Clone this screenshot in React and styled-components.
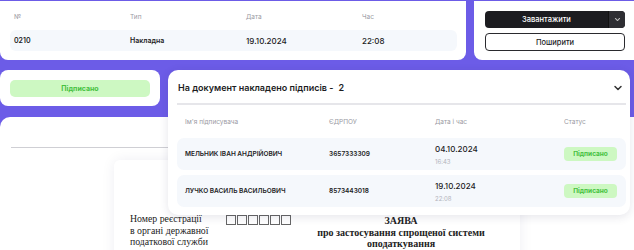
import React from "react";
import styled, { createGlobalStyle } from "styled-components";

const Global = createGlobalStyle`
  html, body { margin: 0; padding: 0; }
  body {
    width: 634px; height: 250px; overflow: hidden;
    background: #6c5ce7;
    font-family: Inter, "Noto Sans", sans-serif;
    color: #1d1d1f;
  }
`;

const Page = styled.div`
  position: relative;
  width: 634px;
  height: 250px;
  padding-top: 1px;
  box-sizing: border-box;
  overflow: hidden;
`;

const TopRow = styled.div`
  display: flex;
  gap: 8px;
  height: 59px;
`;

const Card = styled.div`
  background: #fff;
  border-radius: ${(p) => p.$radius || "8px"};
  box-sizing: border-box;
`;

const InfoCard = styled(Card)`
  width: 466px;
  padding: 11px 9px 0 10px;
`;

const Grid4 = styled.div`
  display: grid;
  grid-template-columns: 116px 116px 116px 1fr;
  align-items: center;
  padding: 0 4px;
`;

const HeadGrid = styled(Grid4)`
  height: 10px;
  font-size: 6.5px;
  color: #9a9aa3;
  margin-bottom: 8px;
`;

const DataGrid = styled(Grid4)`
  height: 21px;
  background: #f5f8fc;
  border-radius: 6px;
  font-size: 7px;
  font-weight: 600;
  color: #1d1d1f;
`;

const DateCell = styled.span`
  font-size: 8px;
  font-weight: 500;
`;

const ActionsCard = styled(Card)`
  flex: 1;
  padding: 10px 9px 0 11px;
  display: flex;
  flex-direction: column;
  gap: 5px;
`;

const SplitButton = styled.div`
  display: flex;
  width: 140px;
  height: 17px;
  border-radius: 4px;
  overflow: hidden;
  background: #1c1c20;
`;

const MainBtn = styled.button`
  flex: 1;
  border: 0;
  background: transparent;
  color: #fff;
  font: 500 7.5px Inter, sans-serif;
  padding: 0;
`;

const ArrowBtn = styled.button`
  width: 17px;
  border: 0;
  border-left: 1px solid #111;
  background: #2e2e33;
  display: flex;
  align-items: center;
  justify-content: center;
  padding: 0;
`;

const OutlineBtn = styled.button`
  width: 140px;
  height: 18px;
  box-sizing: border-box;
  border: 1px solid #2a2a2e;
  border-radius: 4px;
  background: #fff;
  color: #1d1d1f;
  font: 500 7.5px Inter, sans-serif;
  padding: 0;
`;

const StatusCard = styled(Card)`
  margin-top: 10px;
  width: 160px;
  height: 36px;
  padding: 10px;
`;

const Badge = styled.div`
  display: flex;
  align-items: center;
  justify-content: center;
  background: #cdf8c2;
  color: #45c13f;
  font-weight: 700;
  border-radius: ${(p) => (p.$small ? "4px" : "5px")};
  height: ${(p) => (p.$small ? "14px" : "17px")};
  width: ${(p) => (p.$small ? "53px" : "auto")};
  font-size: ${(p) => (p.$small ? "6.5px" : "7px")};
`;

const Lower = styled(Card)`
  margin-top: 11px;
  height: 140px;
  border-radius: 10px 0 0 0;
  padding: 30px 0 0 11px;
`;

const Rule = styled.div`
  height: 1px;
  background: #cfcfd4;
  width: 200px;
`;

const Paper = styled.div`
  margin: 12px 0 0 103px;
  width: 406px;
  height: 120px;
  background: #fff;
  border-radius: 6px;
  box-shadow: 0 0 14px rgba(30, 30, 80, 0.07);
  display: flex;
  align-items: flex-start;
  padding: 53px 0 0 16px;
  box-sizing: border-box;
  font-family: "Liberation Serif", serif;
  color: #222;
`;

const RegText = styled.div`
  font-size: 9.8px;
  line-height: 11.5px;
  width: 96px;
`;

const Boxes = styled.div`
  display: flex;
  gap: 1px;
  margin-top: 2px;
`;

const Box = styled.span`
  width: 8px;
  height: 8px;
  border: 1px solid #666;
`;

const Title = styled.div`
  margin-left: 24px;
  width: 172px;
  text-align: center;
  font-weight: 700;
  font-size: 10px;
  line-height: 11.5px;
  margin-top: 2px;
`;

const Popover = styled.div`
  position: absolute;
  left: 168px;
  top: 70px;
  width: 462px;
  height: 145px;
  background: #fff;
  border-radius: 10px;
  box-shadow: 0 2px 10px rgba(40, 40, 80, 0.12);
  padding: 0 4px 0 9px;
  box-sizing: border-box;
`;

const PopHeader = styled.div`
  height: 35px;
  box-sizing: border-box;
  display: flex;
  align-items: center;
  justify-content: space-between;
  padding: 2px 3px 0 1px;
  border-bottom: 2px solid #e6e6ea;
  font-size: 9px;
  font-weight: 600;
  color: #1d1d1f;
`;

const Count = styled.span`
  margin-left: 5px;
`;

const SigGrid = styled.div`
  display: grid;
  grid-template-columns: 144px 106px 129px 1fr;
  align-items: center;
  padding: 0 8px;
`;

const SigHead = styled(SigGrid)`
  height: 33px;
  font-size: 6.5px;
  color: #9a9aa3;
`;

const SigRow = styled(SigGrid)`
  height: 32px;
  background: #f5f8fc;
  border-radius: 7px;
  margin-bottom: 5px;
  font-size: 6.5px;
  font-weight: 600;
`;

const DateTime = styled.div`
  display: flex;
  flex-direction: column;
  gap: 4px;
  margin-top: 1px;
`;

const DateMain = styled.span`
  font-size: 8px;
  font-weight: 500;
`;

const TimeSub = styled.span`
  font-size: 6px;
  font-weight: 400;
  color: #b3b3bb;
`;

const Chevron = ({ size = 8, color = "#333", width = 1.6 }) => (
  <svg width={size} height={size} viewBox="0 0 10 10">
    <path d="M2 3.5 L5 6.5 L8 3.5" fill="none" stroke={color} strokeWidth={width} strokeLinecap="round" strokeLinejoin="round" />
  </svg>
);

const signers = [
  { name: "МЕЛЬНИК ІВАН АНДРІЙОВИЧ", code: "3657333309", date: "04.10.2024", time: "16:43" },
  { name: "ЛУЧКО ВАСИЛЬ ВАСИЛЬОВИЧ", code: "8573443018", date: "19.10.2024", time: "22:08" },
];

export default function App() {
  return (
    <Page>
      <Global />
      <TopRow>
        <InfoCard $radius="0 0 8px 8px">
          <HeadGrid>
            <span>№</span>
            <span>Тип</span>
            <span>Дата</span>
            <span>Час</span>
          </HeadGrid>
          <DataGrid>
            <span>0210</span>
            <span>Накладна</span>
            <DateCell>19.10.2024</DateCell>
            <DateCell>22:08</DateCell>
          </DataGrid>
        </InfoCard>
        <ActionsCard $radius="0 0 0 8px">
          <SplitButton>
            <MainBtn>Завантажити</MainBtn>
            <ArrowBtn>
              <Chevron size={7} color="#bbb" width={1.5} />
            </ArrowBtn>
          </SplitButton>
          <OutlineBtn>Поширити</OutlineBtn>
        </ActionsCard>
      </TopRow>
      <StatusCard>
        <Badge>Підписано</Badge>
      </StatusCard>
      <Lower>
        <Rule />
        <Paper>
          <RegText>
            Номер реєстрації
            <br />в органі державної
            <br />податкової служби
          </RegText>
          <Boxes>
            {Array.from({ length: 6 }).map((_, i) => (
              <Box key={i} />
            ))}
          </Boxes>
          <Title>
            ЗАЯВА
            <br />
            про застосування спрощеної системи
            <br />
            оподаткування
          </Title>
        </Paper>
      </Lower>
      <Popover>
        <PopHeader>
          <span>
            На документ накладено підписів -<Count>2</Count>
          </span>
          <Chevron size={10} color="#333" width={1.5} />
        </PopHeader>
        <SigHead>
          <span>Ім'я підписувача</span>
          <span>ЄДРПОУ</span>
          <span>Дата і час</span>
          <span>Статус</span>
        </SigHead>
        {signers.map((s) => (
          <SigRow key={s.code}>
            <span>{s.name}</span>
            <span>{s.code}</span>
            <DateTime>
              <DateMain>{s.date}</DateMain>
              <TimeSub>{s.time}</TimeSub>
            </DateTime>
            <Badge $small>Підписано</Badge>
          </SigRow>
        ))}
      </Popover>
    </Page>
  );
}
